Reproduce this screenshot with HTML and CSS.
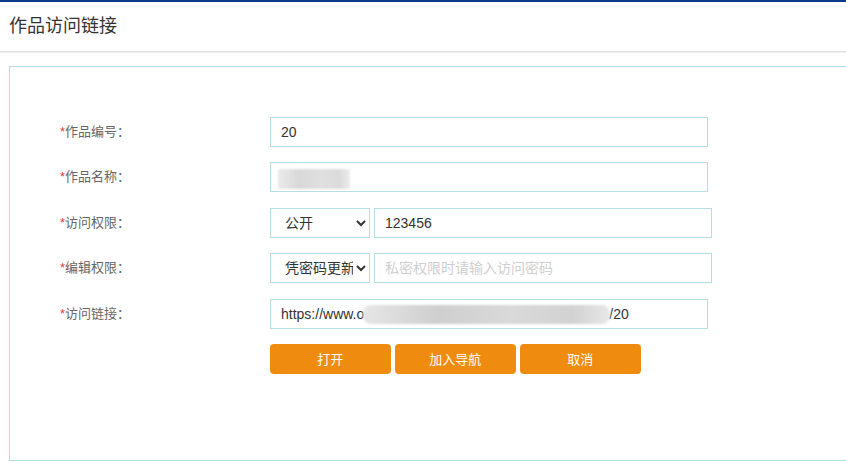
FILE: index.html
```html
<!DOCTYPE html>
<html lang="zh-CN">
<head>
    <meta charset="UTF-8">
    <meta name="viewport" content="width=device-width, initial-scale=1.0">
    <title>作品访问链接</title>
    <link rel="stylesheet" href="styles.css">
</head>
<body>
    <div class="page-header">
        <h1>作品访问链接</h1>
    </div>

    <div class="panel">
        <form class="link-form">
            <div class="form-row">
                <label class="form-label"><i>*</i>作品编号：</label>
                <input type="text" class="field" value="20">
            </div>

            <div class="form-row">
                <label class="form-label"><i>*</i>作品名称：</label>
                <div class="field-wrap">
                    <input type="text" class="field" value="">
                    <span class="mosaic mosaic-name"></span>
                </div>
            </div>

            <div class="form-row">
                <label class="form-label"><i>*</i>访问权限：</label>
                <select class="picker">
                    <option>公开</option>
                    <option>私密</option>
                </select>
                <input type="text" class="field field-short" value="123456">
            </div>

            <div class="form-row">
                <label class="form-label"><i>*</i>编辑权限：</label>
                <select class="picker">
                    <option>凭密码更新</option>
                    <option>禁止更新</option>
                </select>
                <input type="text" class="field field-short" placeholder="私密权限时请输入访问密码">
            </div>

            <div class="form-row">
                <label class="form-label"><i>*</i>访问链接：</label>
                <div class="field-wrap">
                    <input type="text" class="field" value="https://www.o                                                               /20">
                    <span class="mosaic mosaic-url"></span>
                </div>
            </div>

            <div class="form-row buttons">
                <button type="button" class="btn">打开</button>
                <button type="button" class="btn">加入导航</button>
                <button type="button" class="btn">取消</button>
            </div>
        </form>
    </div>
</body>
</html>
```

FILE: styles.css
```css
html, body {
    margin: 0;
    padding: 0;
    overflow: hidden;
}

body {
    font-family: "Liberation Sans", Arial, "Noto Sans CJK SC", sans-serif;
    background-color: #fff;
    color: #333;
    height: 462px;
}

.page-header {
    border-top: 2px solid #0d3a8a;
    border-bottom: 1px solid #e3e3e3;
    box-shadow: 0 1px 1px #f0f0f0;
    height: 49px;
    padding-left: 9px;
}

.page-header h1 {
    margin: 0;
    font-size: 18px;
    font-weight: normal;
    line-height: 48px;
    color: #333;
}

.panel {
    margin: 14px -20px 0 9px;
    border: 1px solid #b5dde3;
    height: 393px;
}

.link-form {
    padding: 50px 0 0 50px;
}

.form-row {
    display: flex;
    align-items: center;
    height: 30px;
    margin-bottom: 15.4px;
}

.form-label {
    width: 210px;
    margin-top: -3px;
    font-size: 13px;
    color: #666;
}

.form-label i {
    font-style: normal;
    color: #e4393c;
}

.field-wrap {
    position: relative;
}

.field {
    box-sizing: border-box;
    width: 438px;
    height: 30px;
    border: 1px solid #b5dde3;
    padding: 0 10px;
    font-family: inherit;
    font-size: 14px;
    color: #333;
    outline: none;
    white-space: pre;
}

.field::placeholder {
    color: #cfcfcf;
}

.field-short {
    width: 338px;
    margin-left: 4px;
}

.picker {
    box-sizing: border-box;
    width: 100px;
    height: 30px;
    border: 1px solid #b5dde3;
    border-radius: 0;
    background-color: #fff;
    padding: 0 0 0 10px;
    font-family: inherit;
    font-size: 14px;
    color: #333;
    outline: none;
}

/* blurred-out parts of the screenshot */
.mosaic {
    position: absolute;
    background: linear-gradient(90deg, #e6e6e6, #cfcfcf 30%, #d9d9d9 60%, #d2d2d2 85%, #e8e8e8);
    filter: blur(1px);
}

.mosaic-name {
    left: 8px;
    top: 7px;
    width: 72px;
    height: 20px;
    opacity: 0.8;
}

.mosaic-url {
    left: 93px;
    top: 6px;
    width: 247px;
    height: 19px;
    border-radius: 8px;
}

.buttons {
    margin-left: 210px;
    gap: 4.5px;
}

.btn {
    width: 120.5px;
    height: 30px;
    border: none;
    border-radius: 4px;
    background-color: #ef8c10;
    color: #fff;
    font-family: inherit;
    font-size: 13px;
    cursor: pointer;
}

.btn:hover {
    background-color: #e07f05;
}
```
